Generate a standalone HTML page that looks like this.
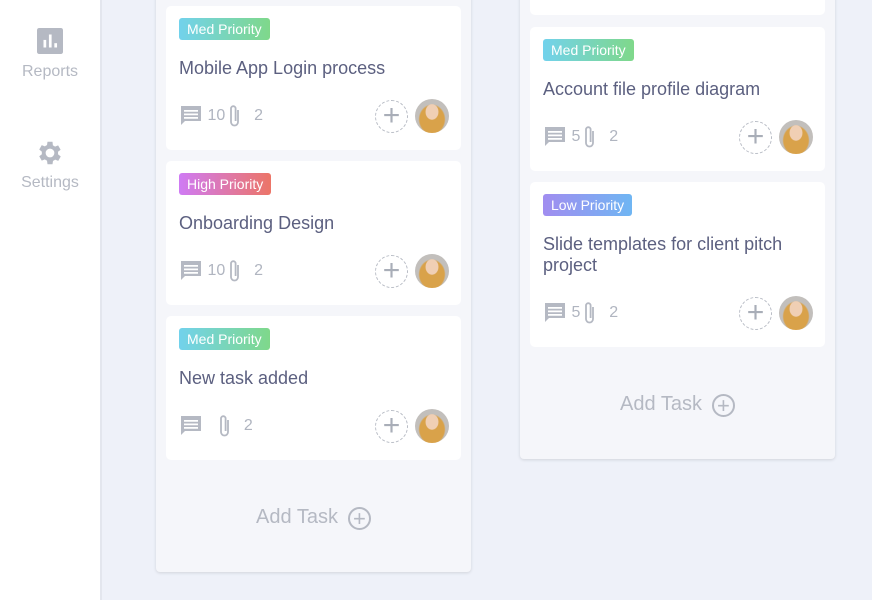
<!DOCTYPE html><html><head><style>
body{margin:0;width:872px;height:600px;overflow:hidden;background:#eef1f9;font-family:"Liberation Sans",sans-serif;position:relative}
.side{position:absolute;left:0;top:0;width:100px;height:600px;background:#fff;border-right:2px solid #e3e6ee}
.nav{position:absolute;left:0;width:100px;text-align:center;color:#b5b9c3;font-size:16px}
.col{position:absolute;background:#f5f6fa;border-radius:4px;box-shadow:0 1px 3px rgba(0,0,0,.12)}
.card{position:absolute;left:10px;width:295px;background:#fff;border-radius:5px}
.tag{position:absolute;left:13px;top:12px;height:22px;line-height:22px;padding:0 8px;border-radius:3px;color:#fff;font-size:14px}
.med{background:linear-gradient(90deg,#72d2ec,#7fd88a)}
.high{background:linear-gradient(90deg,#cf7bf4,#ec7567)}
.low{background:linear-gradient(90deg,#a18df0,#6fb6f3)}
.title{position:absolute;left:13px;width:270px;font-size:18px;color:#5c6080;line-height:21px}
.meta{position:absolute;left:13px;font-size:16px;color:#b0b5c0;display:flex;align-items:center;height:24px}
.meta svg{flex:none}
.plus{position:absolute;right:53px;width:33px;height:33px;border:1px dashed #b8bcc5;border-radius:50%;box-sizing:border-box;color:#a9aeb8;text-align:center;line-height:29px;font-size:30px;font-weight:300}
.av{position:absolute;right:12px;width:34px;height:34px;border-radius:50%;background:radial-gradient(ellipse 20% 24% at 50% 38%,#f0cfb4 90%,transparent 100%),radial-gradient(ellipse 40% 45% at 50% 60%,#d9a24a 90%,transparent 100%),#c2bfbc}
.add{position:absolute;width:100%;text-align:center;font-size:20px;color:#b5b9c3}
.add span{display:inline-block;width:23px;height:23px;border:2px solid #b5b9c3;border-radius:50%;box-sizing:border-box;line-height:19px;font-size:22px;vertical-align:-3px;margin-left:10px}
</style></head><body>
<div class="side"></div>
<div class="nav" style="top:28px"><svg width="26" height="26" viewBox="0 0 24 24"><rect x="0" y="0" width="24" height="24" rx="2" fill="#b5b9c3"/><rect x="6" y="11" width="2.5" height="7" fill="#fff"/><rect x="11" y="6" width="2.5" height="12" fill="#fff"/><rect x="16" y="14" width="2.5" height="4" fill="#fff"/></svg><div style="margin-top:4px">Reports</div></div>
<div class="nav" style="top:138px"><svg width="30" height="30" viewBox="0 0 24 24"><path fill="#b5b9c3" d="M19.4 13a7.5 7.5 0 000-2l2.1-1.6-2-3.5-2.5 1a7.4 7.4 0 00-1.7-1L15 3h-4l-.4 2.7a7.4 7.4 0 00-1.7 1l-2.5-1-2 3.5L6.5 11a7.5 7.5 0 000 2l-2.1 1.6 2 3.5 2.5-1a7.4 7.4 0 001.7 1L11 21h4l.4-2.7a7.4 7.4 0 001.7-1l2.5 1 2-3.5zM13 15.5a3.5 3.5 0 110-7 3.5 3.5 0 010 7z" transform="translate(-1 0)"/></svg><div style="margin-top:1px">Settings</div></div>

<div class="col" style="left:156px;top:-10px;width:315px;height:582px">
 <div class="card" style="top:16px;height:144px"><div class="tag med">Med Priority</div><div class="title" style="top:52px">Mobile App Login process</div>
  <div class="meta" style="top:98px"><svg width="24" height="24" viewBox="0 0 24 24"><path fill="#b5b9c3" d="M2 2h20v15H6l-4 4zM5 6h14v1.8H5zm0 3.5h14v1.8H5zm0 3.5h14v1.8H5z" fill-rule="evenodd"/></svg>&nbsp;10<svg width="20" height="24" viewBox="0 0 20 24"><path d="M13 6v12a3.5 3.5 0 01-7 0V4.5a2.3 2.3 0 014.6 0V17" fill="none" stroke="#b5b9c3" stroke-width="1.8"/></svg>&nbsp;&nbsp;2</div>
  <div class="plus" style="top:94px">+</div><div class="av" style="top:93px"></div></div>
 <div class="card" style="top:171px;height:144px"><div class="tag high">High Priority</div><div class="title" style="top:52px">Onboarding Design</div>
  <div class="meta" style="top:98px"><svg width="24" height="24" viewBox="0 0 24 24"><path fill="#b5b9c3" d="M2 2h20v15H6l-4 4zM5 6h14v1.8H5zm0 3.5h14v1.8H5zm0 3.5h14v1.8H5z" fill-rule="evenodd"/></svg>&nbsp;10<svg width="20" height="24" viewBox="0 0 20 24"><path d="M13 6v12a3.5 3.5 0 01-7 0V4.5a2.3 2.3 0 014.6 0V17" fill="none" stroke="#b5b9c3" stroke-width="1.8"/></svg>&nbsp;&nbsp;2</div>
  <div class="plus" style="top:94px">+</div><div class="av" style="top:93px"></div></div>
 <div class="card" style="top:326px;height:144px"><div class="tag med">Med Priority</div><div class="title" style="top:52px">New task added</div>
  <div class="meta" style="top:98px"><svg width="24" height="24" viewBox="0 0 24 24"><path fill="#b5b9c3" d="M2 2h20v15H6l-4 4zM5 6h14v1.8H5zm0 3.5h14v1.8H5zm0 3.5h14v1.8H5z" fill-rule="evenodd"/></svg><span style="width:12px"></span><svg width="20" height="24" viewBox="0 0 20 24"><path d="M13 6v12a3.5 3.5 0 01-7 0V4.5a2.3 2.3 0 014.6 0V17" fill="none" stroke="#b5b9c3" stroke-width="1.8"/></svg>&nbsp;&nbsp;2</div>
  <div class="plus" style="top:94px">+</div><div class="av" style="top:93px"></div></div>
 <div class="add" style="top:516px">Add Task<span>+</span></div>
</div>

<div class="col" style="left:520px;top:-10px;width:315px;height:469px">
 <div class="card" style="top:0;height:25px"></div>
 <div class="card" style="top:37px;height:144px"><div class="tag med">Med Priority</div><div class="title" style="top:52px">Account file profile diagram</div>
  <div class="meta" style="top:98px"><svg width="24" height="24" viewBox="0 0 24 24"><path fill="#b5b9c3" d="M2 2h20v15H6l-4 4zM5 6h14v1.8H5zm0 3.5h14v1.8H5zm0 3.5h14v1.8H5z" fill-rule="evenodd"/></svg>&nbsp;5<svg width="20" height="24" viewBox="0 0 20 24"><path d="M13 6v12a3.5 3.5 0 01-7 0V4.5a2.3 2.3 0 014.6 0V17" fill="none" stroke="#b5b9c3" stroke-width="1.8"/></svg>&nbsp;&nbsp;2</div>
  <div class="plus" style="top:94px">+</div><div class="av" style="top:93px"></div></div>
 <div class="card" style="top:192px;height:165px"><div class="tag low">Low Priority</div><div class="title" style="top:52px">Slide templates for client pitch project</div>
  <div class="meta" style="top:119px"><svg width="24" height="24" viewBox="0 0 24 24"><path fill="#b5b9c3" d="M2 2h20v15H6l-4 4zM5 6h14v1.8H5zm0 3.5h14v1.8H5zm0 3.5h14v1.8H5z" fill-rule="evenodd"/></svg>&nbsp;5<svg width="20" height="24" viewBox="0 0 20 24"><path d="M13 6v12a3.5 3.5 0 01-7 0V4.5a2.3 2.3 0 014.6 0V17" fill="none" stroke="#b5b9c3" stroke-width="1.8"/></svg>&nbsp;&nbsp;2</div>
  <div class="plus" style="top:115px">+</div><div class="av" style="top:114px"></div></div>
 <div class="add" style="top:403px">Add Task<span>+</span></div>
</div>
</body></html>
